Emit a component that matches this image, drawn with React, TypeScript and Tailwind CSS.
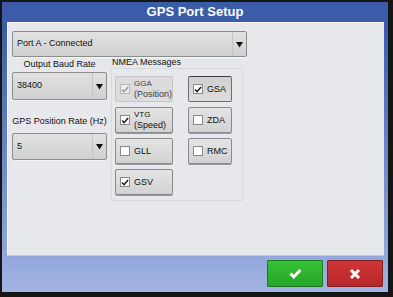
import React from 'react';

const font = { fontFamily: '"Liberation Sans", Arial, sans-serif' };

function Arrow() {
    return (
        <svg width="7" height="7" viewBox="0 0 7 7" className="shrink-0">
            <path d="M0 1 L7 1 L3.5 6.5 Z" fill="#111" />
        </svg>
    );
}

function Dropdown({ value, className }: { value: string; className: string }) {
    return (
        <div
            className={`flex items-center rounded-[2px] border border-[#8d8d8d] bg-gradient-to-b from-[#e2e2e2] to-[#d0d0d0] shadow-[0_1px_0_#f4f4f4] ${className}`}
        >
            <span className="flex-1 pl-[4px] text-[9px] text-[#111]">{value}</span>
            <div className="flex h-full w-[14px] items-center justify-center border-l border-[#c4c4c4]">
                <Arrow />
            </div>
        </div>
    );
}

function CheckBox({ checked, disabled }: { checked: boolean; disabled?: boolean }) {
    return (
        <div
            className={`flex h-[10px] w-[10px] shrink-0 items-center justify-center border ${
                disabled ? 'border-[#b8b8b8] bg-[#ececec]' : 'border-[#8a8a8a] bg-white'
            }`}
        >
            {checked && (
                <svg width="9" height="9" viewBox="0 0 9 9">
                    <path
                        d="M1.2 4.6 L3.4 7 L8 1.6"
                        fill="none"
                        stroke={disabled ? '#9a9a9a' : '#1a1a1a'}
                        strokeWidth="1.7"
                    />
                </svg>
            )}
        </div>
    );
}

interface MsgProps {
    label: string;
    sub?: string;
    checked: boolean;
    disabled?: boolean;
    pressed?: boolean;
}

function MsgButton({ label, sub, checked, disabled, pressed }: MsgProps) {
    return (
        <div
            className={`flex h-[26px] items-center gap-[4px] rounded-[2px] border pl-[4px] ${
                disabled
                    ? 'border-[#c6c6c6] bg-[#dcdcdc]'
                    : pressed
                      ? 'border-[#6f6f6f] border-t-[#3e3e3e] bg-gradient-to-b from-[#cfcfcf] to-[#dedede]'
                      : 'border-[#8a8a8a] bg-gradient-to-b from-[#e4e4e4] to-[#d2d2d2] shadow-[0_1px_0_#9a9a9a]'
            }`}
        >
            <CheckBox checked={checked} disabled={disabled} />
            <div className={`text-[9px] leading-[10px] ${disabled ? 'text-[#3c3c3c]' : 'text-[#111]'}`}>
                <div className={sub ? 'text-[8px]' : ''}>{label}</div>
                {sub && <div>{sub}</div>}
            </div>
        </div>
    );
}

export default function App() {
    return (
        <div className="h-[297px] w-[393px] bg-[#151515] pb-[5px] pl-[2px] pr-[5px] pt-[2px]" style={font}>
            <div className="flex h-full w-full flex-col bg-gradient-to-b from-[#3a5ca9] from-[8%] to-[#a1b4e3]">
                {/* Header */}
                <div className="flex h-[20px] items-center justify-center bg-[#3a5ca9] text-[13px] font-bold text-white">
                    GPS Port Setup
                </div>

                {/* Panel */}
                <div className="ml-[5px] mr-[4px] h-[233px] border-l border-t border-[#f7f7f9] bg-[#e7e8ec] pl-[4px] pt-[8px] shadow-[0_1px_0_#c5c9d6]">
                    <Dropdown value="Port A - Connected" className="h-[26px] w-[235px]" />

                    <div className="mt-[1px] flex">
                        {/* Left column */}
                        <div className="flex w-[95px] flex-col">
                            <div className="flex h-[14px] items-center justify-center text-[9px] text-[#111]">
                                Output Baud Rate
                            </div>
                            <Dropdown value="38400" className="h-[28px] w-[95px]" />
                            <div className="flex h-[33px] items-end justify-center pb-[5px] text-[9px] text-[#111]">
                                GPS Position Rate (Hz)
                            </div>
                            <Dropdown value="5" className="h-[27px] w-[95px]" />
                        </div>

                        {/* NMEA */}
                        <div className="ml-[4px] flex flex-col">
                            <div className="flex h-[10px] items-center pl-[1px] text-[9px] text-[#111]">NMEA Messages</div>
                            <div className="h-[133px] w-[132px] border border-[#d9dae0] pl-[3px] pt-[7px]">
                                <div className="grid grid-cols-[58px_44px] gap-x-[15px] gap-y-[5px]">
                                    <MsgButton label="GGA" sub="(Position)" checked disabled />
                                    <MsgButton label="GSA" checked pressed />
                                    <MsgButton label="VTG" sub="(Speed)" checked />
                                    <MsgButton label="ZDA" checked={false} />
                                    <MsgButton label="GLL" checked={false} />
                                    <MsgButton label="RMC" checked={false} />
                                    <MsgButton label="GSV" checked />
                                </div>
                            </div>
                        </div>
                    </div>
                </div>

                {/* Footer */}
                <div className="flex flex-1 justify-end gap-[4px] pr-[5px] pt-[5px]">
                    <div className="flex h-[27px] w-[56px] items-center justify-center rounded-[1px] border border-[#1d7a1d] bg-gradient-to-b from-[#36c236] to-[#26a626]">
                        <svg width="13" height="11" viewBox="0 0 13 11">
                            <path d="M1.5 5.5 L4.8 8.8 L11.5 2" fill="none" stroke="white" strokeWidth="3" />
                        </svg>
                    </div>
                    <div className="flex h-[27px] w-[56px] items-center justify-center rounded-[1px] border border-[#8a1c1e] bg-gradient-to-b from-[#cf3537] to-[#b8272a]">
                        <svg width="12" height="12" viewBox="0 0 12 12">
                            <path d="M2 2 L10 10 M10 2 L2 10" fill="none" stroke="white" strokeWidth="3" />
                        </svg>
                    </div>
                </div>
            </div>
        </div>
    );
}
